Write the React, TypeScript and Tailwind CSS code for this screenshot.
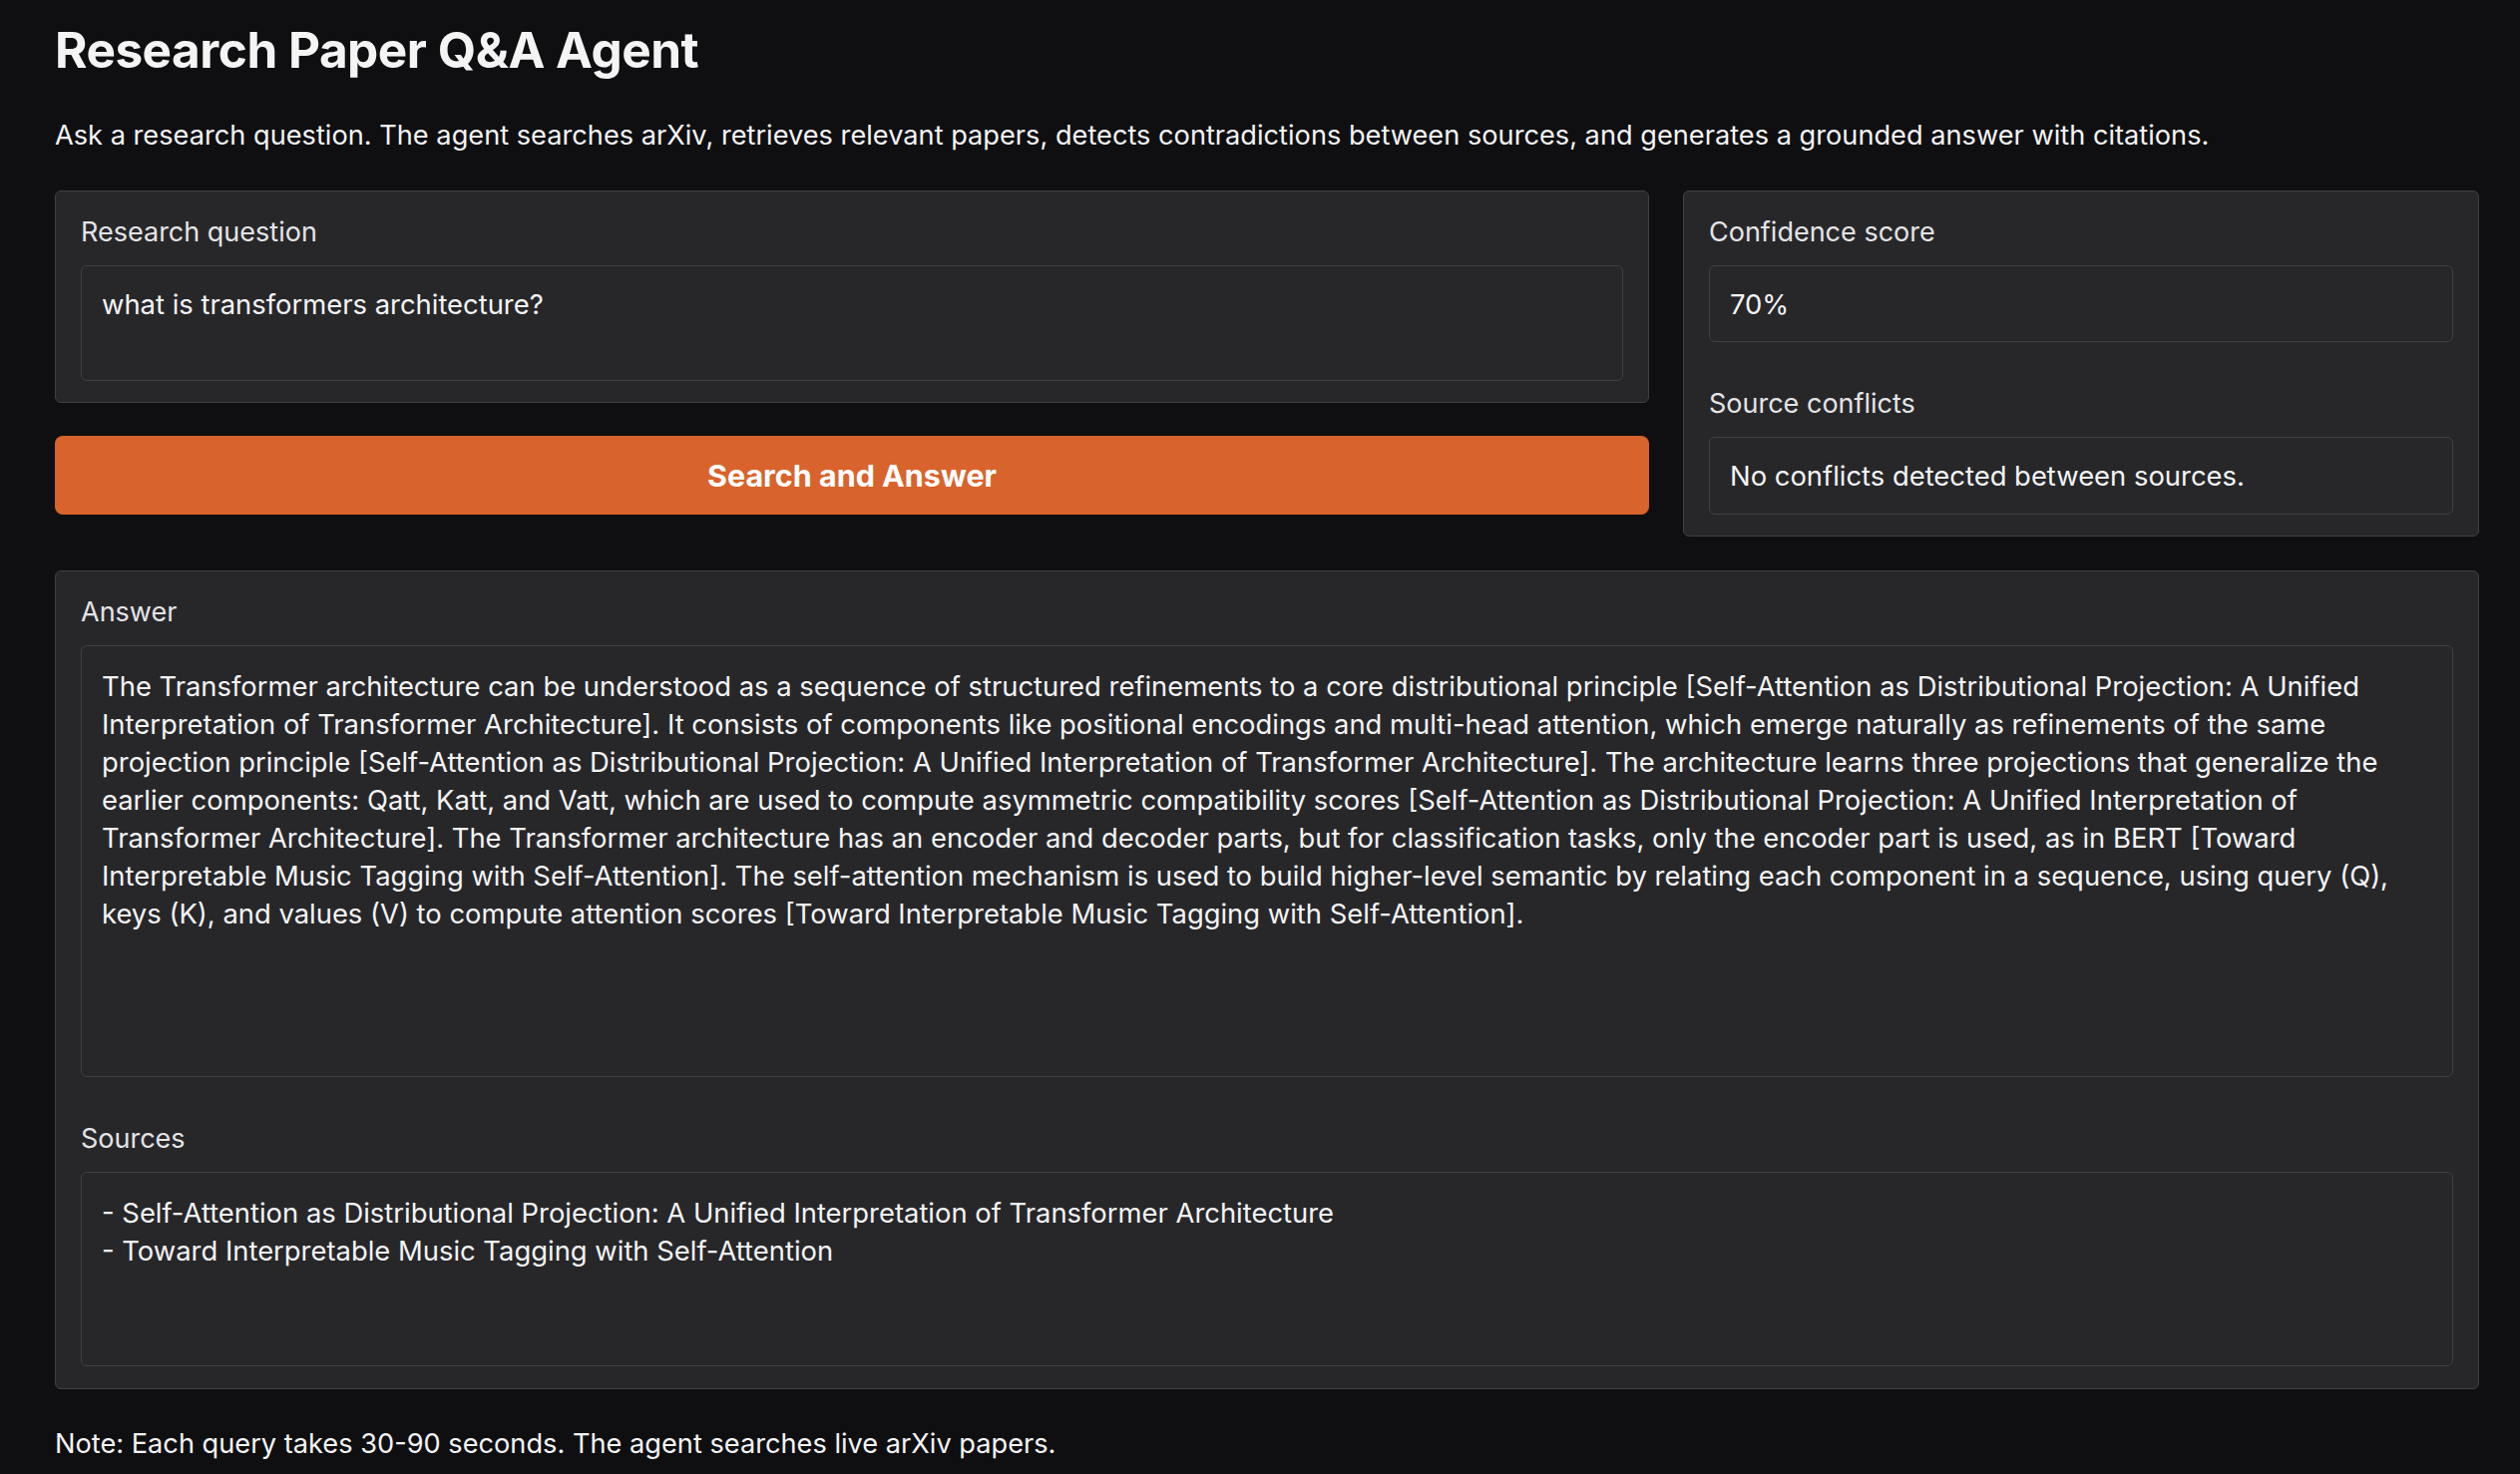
import React from "react";

const answerLines = [
  "The Transformer architecture can be understood as a sequence of structured refinements to a core distributional principle [Self-Attention as Distributional Projection: A Unified",
  "Interpretation of Transformer Architecture]. It consists of components like positional encodings and multi-head attention, which emerge naturally as refinements of the same",
  "projection principle [Self-Attention as Distributional Projection: A Unified Interpretation of Transformer Architecture]. The architecture learns three projections that generalize the",
  "earlier components: Qatt, Katt, and Vatt, which are used to compute asymmetric compatibility scores [Self-Attention as Distributional Projection: A Unified Interpretation of",
  "Transformer Architecture]. The Transformer architecture has an encoder and decoder parts, but for classification tasks, only the encoder part is used, as in BERT [Toward",
  "Interpretable Music Tagging with Self-Attention]. The self-attention mechanism is used to build higher-level semantic by relating each component in a sequence, using query (Q),",
  "keys (K), and values (V) to compute attention scores [Toward Interpretable Music Tagging with Self-Attention].",
];

function Label({ children }: { children: React.ReactNode }) {
  return (
    <div className="text-[27px] leading-[33px] text-[#e4e4e7] mb-[17px]">{children}</div>
  );
}

function Box({ className, children }: { className: string; children?: React.ReactNode }) {
  return (
    <div
      className={
        "border border-[#3f3f46] rounded-[6px] bg-[#27272a] pl-[20px] pr-[20px] text-[27.4px] leading-[38px] text-[#f4f4f5] " +
        className
      }
    >
      {children}
    </div>
  );
}

export default function App() {
  return (
    <div
      className="min-h-screen bg-[#0f0f11] pl-[55px] pr-[41px] pt-[21px] pb-[20px]"
      style={{ fontFamily: "Inter, 'Noto Sans', sans-serif" }}
    >
      <h1 className="text-[49.5px] leading-[59px] font-bold text-[#f4f4f5] tracking-[-0.5px]">
        Research Paper Q&amp;A Agent
      </h1>
      <p className="mt-[37px] text-[27.2px] leading-[38px] text-[#f4f4f5]">
        Ask a research question. The agent searches arXiv, retrieves relevant papers, detects contradictions between
        sources, and generates a grounded answer with citations.
      </p>

      <div className="mt-[36px] flex gap-[34px] items-start">
        <div className="w-[1598px] shrink-0 flex flex-col gap-[33px]">
          <div className="border border-[#3f3f46] rounded-[6px] bg-[#27272a] px-[25px] pt-[24px] pb-[21px]">
            <Label>Research question</Label>
            <Box className="h-[116px] pt-[19px]">what is transformers architecture?</Box>
          </div>
          <button className="h-[79px] rounded-[8px] bg-[#d9632c] text-white text-[30.5px] font-bold">
            Search and Answer
          </button>
        </div>
        <div className="w-[798px] shrink-0 border border-[#3f3f46] rounded-[6px] bg-[#27272a] px-[25px] pt-[24px] pb-[21px]">
          <Label>Confidence score</Label>
          <Box className="h-[77px] pt-[19px]">70%</Box>
          <div className="mt-[45px]">
            <Label>Source conflicts</Label>
          </div>
          <Box className="h-[78px] pt-[19px]">No conflicts detected between sources.</Box>
        </div>
      </div>

      <div className="mt-[34px] border border-[#3f3f46] rounded-[6px] bg-[#27272a] px-[25px] pt-[24px] pb-[22px]">
        <Label>Answer</Label>
        <Box className="h-[433px] pt-[21px]">
          {answerLines.map((l, i) => (
            <div key={i} className="whitespace-nowrap">
              {l}
            </div>
          ))}
        </Box>
        <div className="mt-[45px]">
          <Label>Sources</Label>
        </div>
        <Box className="h-[195px] pt-[21px]">
          <div>- Self-Attention as Distributional Projection: A Unified Interpretation of Transformer Architecture</div>
          <div>- Toward Interpretable Music Tagging with Self-Attention</div>
        </Box>
      </div>

      <p className="mt-[36px] text-[27.2px] leading-[38px] text-[#f4f4f5]">
        Note: Each query takes 30-90 seconds. The agent searches live arXiv papers.
      </p>
    </div>
  );
}
